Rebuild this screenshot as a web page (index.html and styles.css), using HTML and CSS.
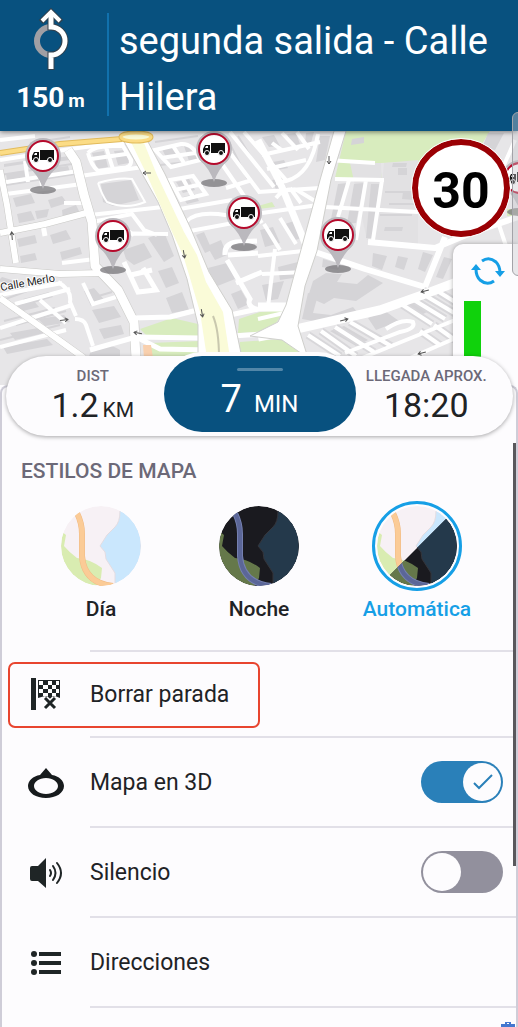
FILE: index.html
```html
<!DOCTYPE html>
<html lang="es">

<head>
  <meta charset="UTF-8">
  <meta name="viewport" content="width=device-width, initial-scale=1">
  <title>Navegación</title>
  <link rel="stylesheet" href="styles.css">
</head>

<body>
  <div class="app">
    <header class="directions">
      <div class="turn">
        <svg class="turn-icon" width="40" height="62" viewBox="0 0 40 62">
          <path d="M20 19 A14 14 0 0 0 20 47" fill="none" stroke="#a09fa4" stroke-width="6" />
          <path d="M20 62 V47 A14 14 0 0 0 20 19 V6" fill="none" stroke="#33414d" stroke-width="7" />
          <path d="M10 14 L20 4 L30 14" fill="none" stroke="#33414d" stroke-width="6" />
          <path d="M20 61 V47 A14 14 0 0 0 20 19 V5" fill="none" stroke="#fff" stroke-width="5" />
          <path d="M11 13 L20 4 L29 13" fill="none" stroke="#fff" stroke-width="4" />
        </svg>
        <div class="turn-distance">150<small>m</small></div>
      </div>
      <h1 class="instruction">segunda salida - Calle Hilera</h1>
    </header>

    <section class="map">
      <svg class="map-canvas" viewBox="0 131 518 257" preserveAspectRatio="xMidYMin slice">
        <defs>
          <g id="truck">
            <path d="M-3 -6 H11 V4 H-3 Z" fill="#111" />
            <path d="M-11 4 V0 L-9 -4 H-4 V4 Z" fill="#111" />
            <path d="M-9 -1 L-8 -3 H-6 V-1 Z" fill="#fff" />
            <circle cx="-7" cy="4" r="2.500" fill="#111" stroke="#fff" />
            <circle cx="7" cy="4" r="2.500" fill="#111" stroke="#fff" />
          </g>
          <g id="pin">
            <ellipse cx="0" cy="34" rx="13" ry="4" fill="#77767a" opacity=".75" />
            <path d="M-15 10 Q-4 20 0 33 Q4 20 15 10 Z" fill="#bbb9be" />
            <circle r="18" fill="#bbb9be" />
            <circle r="15" fill="#fff" stroke="#b5092b" stroke-width="2" />
            <use href="#truck" />
          </g>
          <path id="arrow" d="M-4 0 H4 M1 -2 L4 0 L1 2" fill="none" stroke="#555" />
        </defs>

        <rect y="131" width="518" height="257" fill="#e7e6e8" />

        <!-- parks -->
        <g fill="#d8ecbe">
          <path d="M346 131 H490 L472 160 L380 163 L382 181 L335 178 Z" />
          <path d="M140 329 L172 318 L198 324 L204 338 L146 335 Z" />
          <path d="M150 343 L200 341 L208 358 H150 Z" />
          <path d="M239 319 L260 312 L285 310 L276 323 L258 332 L238 333 Z" />
          <path d="M240 342 L296 338 L304 358 H236 Z" />
          <path d="M258 206 L272 202 L275 207 L258 209 Z M507 209 H518 V216 H507 Z" />
        </g>
        <path d="M350 163 L381 163 L384 240 L367 240 Z M384 163 L418 160 V248 L376 243 Z" fill="#e2e1e3" />

        <!-- buildings -->
        <g fill="#d5d4d7">
          <path d="M6 174 l22 -3 1 6 -22 3z M50 168 l18 -2 2 6 -19 2z M4 164 l20 -3 v3 l-20 3z M55 158 l14 -2 1 4 -14 2z" />
          <path d="M13 198 l18 -4 4 9 -19 4z M17 214 l14 -3 4 9 -16 3z M48 200 l14 -4 5 7 -16 5z M62 210 l14 -5 5 10 -18 4z M35 211 l14 -2 -2 8 -10 2z" />
          <path d="M17 239 l18 -4 2 8 -18 4z M50 235 l16 -5 5 9 -18 5z M20 256 l15 -3 2 7 -16 3z M60 252 l20 -5 2 7 -20 6z" />
          <path d="M92 153 l12 -2 4 16 -11 2z M114 151 l12 -1 3 13 -11 2z M161 147 l13 -2 5 12 -12 2z M184 146 l8 -1 5 14 -8 2z" />
          <path d="M101 184 l30 -4 8 20 -26 6 -10 -4z M176 182 l13 -3 6 11 -12 3z M183 197 l12 -3 4 7 -12 3z" />
          <path d="M123 250 l21 -7 8 14 -18 8 -8 -6z M148 238 l16 -6 10 24 -10 6z M158 271 l14 -4 7 16 -13 5z M166 298 l16 -6 7 18 -17 3z" />
          <path d="M207 246 l14 -6 6 15 -12 5z M208 268 l19 -5 8 16 -20 8z M231 294 l10 -4 8 14 -11 5z M196 235 l8 -3 8 18 -7 3z" />
          <path d="M2 277 l26 8 -7 3 -23 -7z M23 299 l26 -7 4 5 -26 8z M8 307 l26 -6 5 6 -24 6z M38 319 l26 -4 6 7 -25 4z M10 333 l34 -6 5 5 -34 8z M3 347 l44 -8 6 6 -46 9z" />
          <path d="M84 291 l10 -3 12 14 -15 4z M92 310 l22 -4 7 11 -22 6z M99 329 l22 -4 3 9 -20 5z M90 353 q14 -14 30 -3 v10 h-32z" />
          <path d="M262 137 l12 -2 6 11 -11 1z M287 134 l9 -1 4 11 -8 2z M306 133 l8 -1 -3 11 -6 1z M267 163 l17 -3 4 8 -16 3z M272 180 l10 -2 5 12 -10 2z" />
          <path d="M338 184 l10 -1 -8 34 -9 2z M354 184 l10 -1 -8 40 -9 1z M371 184 l8 0 -5 54 -8 0z M320 136 l10 0 -5 24 -9 2z" />
          <path d="M260 230 l13 -3 7 16 -15 4z M285 224 l9 -3 8 17 -10 3z M278 267 l20 -5 -5 16 -13 2z M262 285 l22 -4 -6 18 -12 2z" />
          <path d="M313 281 l13 -8 16 1 -5 8 20 2 11 -9 15 8 -27 18 -22 -3 -10 6 -16 -7z M323 259 l18 5 -3 6 -16 -3z M373 253 l14 3 -5 14 -10 -4z M398 256 l10 2 -4 12 -9 -3z" />
          <path d="M308 293 l10 2 -5 18 18 2 22 -8 4 5 -32 11 -23 -4z M423 252 l10 3 -8 17 -7 -3z M444 257 l8 2 -9 20 -7 -2z M385 227 h18 l-1 4 h-18z" />
          <path d="M398 168 h9 v7 h-9z M352 139 l12 -2 v6 l-13 2z M393 163 l14 0 -1 4 h-14z M488 133 h16 l-9 17 -13 -2z M403 192 l12 1 -1 7 -12 -1z" />
          <path d="M368 318 l17 -7 14 10 -23 9z M403 304 l14 -5 18 9 -14 7z M330 331 l14 -5 24 14 -12 6z" />
        </g>
        <g fill="none" stroke="#d5d4d7" stroke-width="2">
          <path d="M0 175 L72 164 M6 185 L75 174 M30 143 L70 137 M88 146 L119 142 M155 142 L198 136 M160 165 L205 160 M228 140 L249 182 M238 136 L259 170" />
          <path d="M0 301 L30 290 M4 321 L55 308 M16 325 L66 311 M0 340 L60 325 M95 297 L112 292 M385 192 H415 M389 204 H418 M380 215 H412" />
        </g>

        <!-- side streets -->
        <g fill="none" stroke="#fff" stroke-width="4">
          <path d="M0 160 L70 149 L125 142 M0 183 L78 171 M6 194 L82 184 M35 150 L43 190 M25 161 L28 182 M0 140 L35 136" />
          <path d="M88 153 Q94 146 113 146 L123 146 L131 160 Q132 168 121 168 L98 171 Q91 165 88 153 M91 159 L126 154 M106 147 L113 169" />
          <path d="M98 183 Q118 177 132 179 L145 202 Q126 210 107 202 Q102 195 98 183" stroke-width="2" />
          <path d="M155 150 L181 144 Q193 143 200 160 L171 167 Z M161 158 L195 153 M173 146 L184 163 M80 176 L150 166 M64 203 L84 203" />
          <path d="M170 180 L193 176 L206 194 L181 200 Z M174 190 L203 184 M183 179 L193 197 M168 211 L232 200 M90 215 L172 206" />
          <path d="M202 135 L240 190 L262 223 M216 134 L260 193 M230 132 L274 187 M244 132 L286 180 M208 158 L232 150 M226 188 L252 180" />
          <path d="M92 222 L132 214 L144 230 L157 235 M98 233 L168 234 M110 219 L134 235 M187 221 Q195 212 218 214 L246 218 M190 231 L260 218" />
          <path d="M124 262 L138 292 L156 290 L143 268 M131 275 L152 270 M43 225 L45 236" stroke-width="5" />
          <path d="M225 255 Q224 244 236 242 L257 241 M227 260 L250 299 Q246 306 258 310 M228 255 L258 253 M236 283 L262 272" stroke-width="5" />
          <path d="M0 295 L62 283 M15 304 L70 289 M0 328 L72 305 M0 347 L66 330 M58 282 Q72 290 70 302 L76 316 M40 300 L66 323" />
          <path d="M75 319 Q84 319 86 325 L93 346 M83 283 L93 304 L116 297 M62 263 L95 259" />
          <path d="M262 155 L320 142 M267 169 L306 160 M272 143 L283 151 M282 133 L298 150 M297 132 L309 149 M318 134 Q311 175 286 181 L276 183" />
          <path d="M258 192 L320 188 M276 198 Q285 187 297 190 L315 201 M262 213 L318 205 M290 188 L301 203 M264 224 L280 250 M280 218 L296 244 M258 256 L312 250 M262 274 L305 272 M275 249 L268 307" />
          <path d="M349 180 L338 217 M366 180 L356 240 M382 180 L373 240 M328 160 L375 163 M335 179 L384 180 M325 207 L418 212" />
          <path d="M258 319 L284 313 M500 162 L488 205 M515 140 L504 165 M498 222 L506 246" />
        </g>

        <!-- car park -->
        <g fill="none" stroke="#d8d7da" stroke-width="8">
          <path d="M308 335 L340 356 M321 331 L356 356 M335 327 L374 352 M350 322 L391 346 M401 304 L432 324 M414 300 L445 319 M426 296 L456 314 M439 292 L460 305 M420 331 L440 345 M434 325 L455 340" />
        </g>
        <g fill="none" stroke="#fff" stroke-width="4">
          <path d="M308 335 L340 356 M321 331 L356 356 M335 327 L374 352 M350 322 L391 346 M401 304 L432 324 M414 300 L445 319 M426 296 L456 314 M439 292 L460 305 M420 331 L440 345 M434 325 L455 340" />
          <path d="M345 353 L400 332 Q416 329 413 322 Q402 318 386 329 M362 358 L460 318 M410 358 L458 337" />
        </g>

        <!-- main streets -->
        <g fill="none" stroke="#c9c9c6" stroke-width="10" stroke-linejoin="round">
          <path d="M68 150 L76 162 L84 195 L92 222 L95 266 L118 290 L134 322 L136 358" />
          <path d="M0 170 L7 205 L16 263" stroke-width="7" />
          <path d="M0 269 L60 274 L102 273" stroke-width="7" />
          <path d="M0 298 L45 330 L84 358" stroke-width="7" />
          <path d="M0 233 L45 224 L90 212" stroke-width="7" />
        </g>
        <g fill="none" stroke="#fff" stroke-width="9" stroke-linejoin="round">
          <path d="M68 150 L76 162 L84 195 L92 222 L95 266 L118 290 L134 322 L136 358" />
          <path d="M0 170 L7 205 L16 263 M0 269 L60 274 L102 273 M0 298 L45 330 L84 358 M0 233 L45 224 L90 212" stroke-width="6" />
          <path d="M134 318 L170 317 L205 308 M90 350 L136 337 L200 338 L262 334 L300 330 M136 337 L160 349 L210 350 M230 315 L258 309" stroke-width="5" />
          <path d="M258 140 L282 187 L305 243" stroke-width="7" />
          <path d="M315 252 L365 269 L425 287 M368 242 L435 248 L471 233 L518 217 M445 237 L425 287" stroke-width="6" />
          <path d="M258 307 L289 307 M258 337 L292 330 L380 310 L425 294 L462 280" />
        </g>
        <path d="M334 131 H346 L331 180 L317 251 L305 286 L298 326 L308 358 L282 340 L250 336 L278 322 L286 305 L302 246 L320 180 Z" fill="#fff" stroke="#cfcfcc" />
        <path d="M122 138 L146 138 L165 174 L191 229 L209 272 L232 310 L242 358 H198 L198 325 L187 279 L172 235 L158 202 Z" fill="#fff" stroke="#cfcfcc" />
        <path d="M130 140 L142 138 L157 175 L184 232 L197 255 L206 282 L223 312 L230 358 H207 L200 312 L190 278 L183 255 L172 232 L147 175 Z" fill="#fafbd8" />
        <path d="M213 316 Q219 330 219 358" fill="none" stroke="#c9c8ae" stroke-width="2" />
        <path d="M143 345 h8 l2 13 h-9z" fill="#f9d0ae" />

        <!-- avenue and roundabout -->
        <path d="M0 153 L60 144 L122 139" fill="none" stroke="#e2bb5c" stroke-width="6" />
        <path d="M0 153 L60 144 L122 139" fill="none" stroke="#fbdc86" stroke-width="4" />
        <ellipse cx="136" cy="137" rx="15" ry="4" fill="none" stroke="#e2bb5c" stroke-width="5" />
        <ellipse cx="136" cy="137" rx="15" ry="4" fill="#fafbd8" stroke="#fbdc86" stroke-width="3" />

        <use href="#arrow" transform="translate(147 173) rotate(180)" />
        <use href="#arrow" transform="translate(184 254) rotate(80)" />
        <use href="#arrow" transform="translate(202 313) rotate(80)" />
        <use href="#arrow" transform="translate(64 320) rotate(-8)" />
        <use href="#arrow" transform="translate(138 333) rotate(190)" />
        <use href="#arrow" transform="translate(12 236) rotate(-95)" />
        <use href="#arrow" transform="translate(329 160) rotate(90)" />
        <use href="#arrow" transform="translate(344 320) rotate(-15)" />
        <use href="#arrow" transform="translate(425 291) rotate(165)" />
        <use href="#arrow" transform="translate(422 353) rotate(165)" />

        <text class="street-name" x="1" y="291" transform="rotate(-10 1 291)">Calle Merlo</text>

        <use href="#pin" x="43" y="156" />
        <use href="#pin" x="214" y="149" />
        <use href="#pin" x="244" y="213" />
        <use href="#pin" x="113" y="236" />
        <use href="#pin" x="338" y="235" />
        <use href="#pin" x="520" y="178" />
      </svg>

      <div class="speed-limit">30</div>
      <div class="traffic">
        <button class="refresh" type="button" aria-label="Actualizar">
          <svg width="34" height="28" viewBox="0 0 34 28" fill="none" stroke="#169fe6" stroke-width="3">
            <path d="M11 4 Q18 -1 25 5 Q29 9 29 16" />
            <path d="M23 24 Q16 29 9 23 Q5 19 5 12" />
            <path d="M24 14 H34 L29 20 Z M0 13 H10 L5 7 Z" fill="#169fe6" stroke="none" />
          </svg>
        </button>
        <div class="traffic-level"></div>
      </div>
    </section>

    <main class="sheet">
      <div class="trip">
        <div class="trip-item">
          <span class="trip-label">DIST</span>
          <span class="trip-value">1.2<small>KM</small></span>
        </div>
        <button class="trip-time" type="button">
          <span class="handle"></span>
          <span>7<small>MIN</small></span>
        </button>
        <div class="trip-item">
          <span class="trip-label">LLEGADA APROX.</span>
          <span class="trip-value">18:20</span>
        </div>
      </div>

      <h2 class="section-title">ESTILOS DE MAPA</h2>

      <svg class="symbols" width="0" height="0" aria-hidden="true">
        <defs>
          <clipPath id="disc"><circle cx="40" cy="40" r="40" /></clipPath>
          <clipPath id="night-half"><path d="M70 12 L12 70 V80 H80 V12 Z" /></clipPath>
          <g id="day" clip-path="url(#disc)">
            <rect width="80" height="80" fill="#f7f1f5" />
            <path d="M59 5 Q59 16 54 21 L46 29 L39 40 L44 46 L45 53 L54 67 V80 H80 V0 H59 Z" fill="#cae7fd" stroke="#e3dce1" />
            <path d="M0 25 L5 29 L3 40 Q8 46 16 52 Q29 53 41 62 L40 72 L35 80 H0 Z" fill="#d9ecb1" />
            <path d="M16 7 Q21 17 21 28 L21 50 Q23 77 52 80" fill="none" stroke="#f0ba83" stroke-width="6" />
            <path d="M16 7 Q21 17 21 28 L21 50 Q23 77 52 80" fill="none" stroke="#fbcb96" stroke-width="5" />
          </g>
          <g id="night" clip-path="url(#disc)">
            <rect width="80" height="80" fill="#1a1a1f" />
            <path d="M59 5 Q59 16 54 21 L46 29 L39 40 L44 46 L45 53 L54 67 V80 H80 V0 H59 Z" fill="#24394b" stroke="#34353b" />
            <path d="M0 25 L5 29 L3 40 Q8 46 16 52 Q29 53 41 62 L40 72 L35 80 H0 Z" fill="#65784a" />
            <path d="M16 7 Q21 17 21 28 L21 50 Q23 77 52 80" fill="none" stroke="#7580b0" stroke-width="6" />
            <path d="M16 7 Q21 17 21 28 L21 50 Q23 77 52 80" fill="none" stroke="#5b6698" stroke-width="4" />
          </g>
        </defs>
      </svg>
      <div class="styles">
        <label class="style">
          <input type="radio" name="map-style" value="day">
          <svg class="style-preview" viewBox="0 0 80 80"><use href="#day" /></svg>
          <span>Día</span>
        </label>
        <label class="style">
          <input type="radio" name="map-style" value="night">
          <svg class="style-preview" viewBox="0 0 80 80"><use href="#night" /></svg>
          <span>Noche</span>
        </label>
        <label class="style">
          <input type="radio" name="map-style" value="auto" checked>
          <svg class="style-preview" viewBox="0 0 80 80">
            <use href="#day" />
            <g clip-path="url(#night-half)"><use href="#night" /></g>
          </svg>
          <span>Automática</span>
        </label>
      </div>

      <div class="menu">
        <button class="row row-marked" type="button">
          <svg class="row-icon" width="32" height="34" viewBox="0 0 32 34" fill="#1f2526">
            <path d="M1 1 H6 V33 H1 Z" />
            <path d="M8 3 H30 V21 L25 19 L20 22 L15 19 L8 21 Z" />
            <path d="M9 4 h4 v4 h-4z M18 4 h4 v4 h-4z M26 4 h3 v4 h-3z M13 8 h5 v4 h-5z M22 8 h4 v4 h-4z M9 12 h4 v4 h-4z M18 12 h4 v4 h-4z M26 12 h3 v4 h-3z M13 16 h5 v3 h-5z M22 16 h4 v3 h-4z" fill="#fff" />
            <path d="M15 21 L25 31 M25 21 L15 31" stroke="#fff" stroke-width="6" />
            <path d="M15 21 L25 31 M25 21 L15 31" stroke="#1f2526" stroke-width="3" />
          </svg>
          <span class="row-body">Borrar parada</span>
        </button>
        <label class="row">
          <svg class="row-icon" width="38" height="32" viewBox="0 0 38 32" fill="#171b1d">
            <path fill-rule="evenodd" d="M19 1 L25 8 C32 9 37 14 37 19 C37 26 29 31 19 31 C9 31 1 26 1 19 C1 14 6 9 13 8 Z M19 11 C12 11 7 15 7 19 C7 23 12 27 19 27 C26 27 31 23 31 19 C31 15 26 11 19 11 Z" />
          </svg>
          <span class="row-body">Mapa en 3D <input class="switch" type="checkbox" checked></span>
        </label>
        <label class="row">
          <svg class="row-icon" width="34" height="32" viewBox="0 0 34 32" fill="#1f2526">
            <path d="M3 9 H9 L17 1 V31 L9 24 H3 Q1 24 1 22 V11 Q1 9 3 9 Z" />
            <path d="M21 13 Q23 16 21 19 M24 9 Q29 16 24 23 M28 6 Q36 16 28 26" fill="none" stroke="#1f2526" stroke-width="2" stroke-linecap="round" />
          </svg>
          <span class="row-body">Silencio <input class="switch" type="checkbox"></span>
        </label>
        <button class="row" type="button">
          <svg class="row-icon" width="30" height="24" viewBox="0 0 30 24" fill="#1f2526">
            <circle cx="3" cy="3" r="3" />
            <circle cx="3" cy="12" r="3" />
            <circle cx="3" cy="21" r="3" />
            <path d="M8 1 H30 V5 H8 Z M8 10 H30 V14 H8 Z M8 19 H30 V23 H8 Z" />
          </svg>
          <span class="row-body">Direcciones</span>
        </button>
      </div>

      <svg class="briefcase" width="14" height="16" viewBox="0 0 14 16" fill="#4377cf">
        <path fill-rule="evenodd" d="M4 3 V1 H10 V3 H14 V16 H0 V3 Z M6 3 H8 V2 H6 Z" />
      </svg>
      <div class="scrollbar"></div>
    </main>
    <div class="side-tab"></div>
  </div>
</body>

</html>
```

FILE: styles.css
```css
*,
*::before,
*::after {
  box-sizing: border-box;
}

body {
  margin: 0;
  font-family: Roboto, sans-serif;
  color: #1f2326;
  background-color: #fdfcfe;
}

button {
  padding: 0;
  border: 0;
  background: none;
  color: inherit;
  font: inherit;
  cursor: pointer;
}

.app {
  position: relative;
  display: flex;
  flex-direction: column;
  height: 100vh;
  overflow: hidden;
}

/* Top bar */
.directions {
  display: flex;
  align-items: flex-start;
  flex-shrink: 0;
  padding: 13px 0 6px;
  background-color: #08517f;
  color: #fff;
  box-shadow: 0 1px 5px rgba(0, 0, 0, 0.5);
  z-index: 1;
}

.turn {
  display: flex;
  flex-direction: column;
  align-items: center;
  justify-content: space-between;
  width: 109px;
  height: 103px;
  padding-right: 6px;
  border-right: 2px solid #1171ad;
}

.turn-icon {
  margin-top: -5px;
}

.turn-distance {
  font-size: 28px;
  font-weight: 700;
  line-height: 30px;
}

.turn-distance small {
  margin-left: 4px;
  font-size: 19px;
}

.instruction {
  flex: 1;
  margin: 0;
  padding-left: 10px;
  font-size: 38px;
  font-weight: 400;
  line-height: 56px;
}

/* Map */
.map {
  position: relative;
  flex-shrink: 0;
  height: 254px;
  overflow: hidden;
}

.map-canvas {
  display: block;
  width: 100%;
  height: 100%;
}

.street-name {
  font-size: 11px;
  fill: #222;
  stroke: #fff;
  stroke-width: 2px;
  paint-order: stroke;
}

.speed-limit {
  position: absolute;
  top: 8px;
  right: 8px;
  width: 98px;
  height: 98px;
  border: 6px solid #9a0004;
  border-radius: 50%;
  outline: 1px solid #fff;
  background-color: #fff;
  color: #000;
  font-size: 50px;
  font-weight: 700;
  line-height: 92px;
  text-align: center;
}

.traffic {
  position: absolute;
  top: 113px;
  right: 0;
  bottom: 0;
  width: 65px;
  padding: 13px 0 0 11px;
  border-top-left-radius: 10px;
  background-color: #fdfcfe;
  box-shadow: 0 0 4px rgba(0, 0, 0, 0.3);
}

.refresh {
  display: block;
  margin-left: 7px;
}

.refresh svg {
  display: block;
}

.traffic-level {
  width: 17px;
  height: 90px;
  margin-top: 16px;
  background-color: #10d20c;
}

/* Translucent tab on the screen edge */
.side-tab {
  position: absolute;
  top: 112px;
  right: -8px;
  width: 14px;
  height: 164px;
  border: 1px solid #a3a3a8;
  border-radius: 6px;
  background-color: rgba(200, 200, 205, 0.4);
  z-index: 2;
}

/* Bottom sheet */
.sheet {
  position: relative;
  flex: 1;
  border: 2px solid #cfcdd8;
  border-bottom: 0;
  border-radius: 8px 8px 0 0;
  background-color: #fdfcfe;
}

.trip {
  display: grid;
  grid-template-columns: 1fr 192px 1fr;
  height: 80px;
  margin: -31px 3px 0 4px;
  border-radius: 40px;
  background-color: #fdfcfe;
  box-shadow: 0 1px 4px rgba(0, 0, 0, 0.35);
}

.trip-item {
  display: flex;
  flex-direction: column;
  align-items: center;
  padding-top: 10px;
  white-space: nowrap;
}

.trip-label {
  color: #6c6978;
  font-size: 15px;
  font-weight: 500;
  line-height: 20px;
}

.trip-item:first-child {
  padding-left: 16px;
}

.trip-item:last-child {
  padding-right: 16px;
}

.trip-value {
  font-size: 34px;
  line-height: 38px;
}

.trip-value small {
  margin-left: 4px;
  font-size: 21px;
}

.trip-time {
  display: flex;
  flex-direction: column;
  align-items: center;
  height: 76px;
  padding-top: 12px;
  border-radius: 38px;
  background-color: #08517f;
  box-shadow: 0 0 0 4px #fdfcfe;
  color: #fff;
  font-size: 38px;
  line-height: 56px;
}

.trip-time small {
  margin-left: 12px;
  font-size: 24px;
}

.handle {
  width: 46px;
  height: 4px;
  border-radius: 2px;
  background-color: #5286a8;
}

.section-title {
  margin: 20px 0 0 19px;
  color: #6c6978;
  font-size: 21px;
  font-weight: 500;
  line-height: 30px;
}

/* Map styles */
.symbols {
  position: absolute;
}

.styles {
  display: grid;
  grid-template-columns: repeat(3, 1fr);
  padding: 15px 20px 24px;
}

.style {
  display: flex;
  flex-direction: column;
  align-items: center;
  font-size: 21px;
  font-weight: 500;
  line-height: 30px;
  cursor: pointer;
}

.style input {
  position: absolute;
  opacity: 0;
}

.style-preview {
  width: 90px;
  height: 90px;
  margin-bottom: 3px;
  padding: 2px;
  border: 3px solid transparent;
  border-radius: 50%;
}

.style input:checked ~ .style-preview {
  border-color: #169fe6;
}

.style input:checked ~ span {
  color: #169fe6;
}

/* Menu */
.menu {
  border-top: 2px solid transparent;
}

.row {
  position: relative;
  display: grid;
  grid-template-columns: 88px 1fr;
  align-items: center;
  width: 100%;
  height: 90px;
  font-size: 23px;
  text-align: left;
  cursor: pointer;
}

.row-icon {
  justify-self: center;
}

.row-body {
  display: flex;
  align-items: center;
  justify-content: space-between;
  height: 100%;
  padding-right: 13px;
  border-bottom: 2px solid #e2e0e8;
}

.row-marked {
  height: 88px;
}

.row-marked .row-body {
  border-top: 2px solid #e2e0e8;
}

/* Red frame round the marked row */
.row-marked::after {
  content: "";
  position: absolute;
  top: 12px;
  left: 6px;
  width: 252px;
  height: 66px;
  border: 2px solid #e8452f;
  border-radius: 7px;
}

.switch {
  appearance: none;
  width: 82px;
  height: 42px;
  margin: 0;
  padding: 2px;
  border-radius: 21px;
  background-color: #92909d;
  cursor: pointer;
}

.switch::before {
  content: "";
  display: block;
  width: 38px;
  height: 38px;
  border-radius: 50%;
  background-color: #fdfcfe;
}

.switch:checked {
  background-color: #2a80b9;
}

.switch:checked::before {
  margin-left: auto;
  background-image: url("data:image/svg+xml,%3Csvg xmlns='http://www.w3.org/2000/svg' viewBox='0 0 38 38'%3E%3Cpath d='M11 20 L16 25 L29 12' fill='none' stroke='%232a80b9' stroke-width='2'/%3E%3C/svg%3E");
}

.briefcase {
  display: block;
  margin: 13px 1px 0 auto;
}

.scrollbar {
  position: absolute;
  top: 56px;
  right: 0;
  width: 3px;
  height: 423px;
  background-color: #59585c;
}
```
